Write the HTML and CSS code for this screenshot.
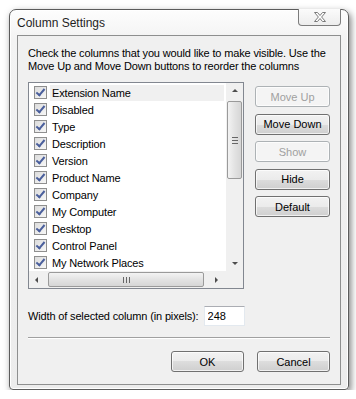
FILE: index.html
```html
<!DOCTYPE html>
<html>
  <head>
    <title>Column Settings</title>
    <meta charset="UTF-8">
    <link rel="stylesheet" href="styles.css">
  </head>

  <body>
    <div class="window">
      <div class="titlebar">
        <div class="title">Column Settings</div>
        <div class="close-btn">
          <svg width="14" height="10" viewBox="0 0 14 10">
            <path d="M1.5 0.5 H4.5 L7 3.5 L9.5 0.5 H12.5 L8.6 5 L12.5 9.5 H9.5 L7 6.5 L4.5 9.5 H1.5 L5.4 5 Z" fill="#fff" stroke="#7a7a7a" stroke-width="1"/>
          </svg>
        </div>
      </div>

      <div class="client">
        <p class="intro">Check the columns that you would like to make visible. Use the Move Up and Move Down buttons to reorder the columns</p>

        <div class="main-row">
          <div class="listbox">
            <ul class="items">
              <li class="item"><span class="check"></span><span class="label selected">Extension Name</span></li>
              <li class="item"><span class="check"></span><span class="label">Disabled</span></li>
              <li class="item"><span class="check"></span><span class="label">Type</span></li>
              <li class="item"><span class="check"></span><span class="label">Description</span></li>
              <li class="item"><span class="check"></span><span class="label">Version</span></li>
              <li class="item"><span class="check"></span><span class="label">Product Name</span></li>
              <li class="item"><span class="check"></span><span class="label">Company</span></li>
              <li class="item"><span class="check"></span><span class="label">My Computer</span></li>
              <li class="item"><span class="check"></span><span class="label">Desktop</span></li>
              <li class="item"><span class="check"></span><span class="label">Control Panel</span></li>
              <li class="item"><span class="check"></span><span class="label">My Network Places</span></li>
            </ul>
            <div class="vscroll">
              <span class="arrow up"></span>
              <div class="vthumb"><span class="grip-h"></span></div>
              <span class="arrow down"></span>
            </div>
            <div class="hscroll">
              <span class="arrow left"></span>
              <div class="hthumb"><span class="grip-v"></span></div>
              <span class="arrow right"></span>
            </div>
            <div class="corner"></div>
          </div>

          <div class="side-buttons">
            <button class="btn" disabled>Move Up</button>
            <button class="btn">Move Down</button>
            <button class="btn" disabled>Show</button>
            <button class="btn">Hide</button>
            <button class="btn">Default</button>
          </div>
        </div>

        <div class="width-row">
          <label for="colwidth">Width of selected column (in pixels):</label>
          <input id="colwidth" class="field" type="text" value="248">
        </div>

        <div class="separator"></div>

        <div class="footer-buttons">
          <button class="btn btn-wide">OK</button>
          <button class="btn btn-wide">Cancel</button>
        </div>
      </div>
    </div>
  </body>
</html>
```

FILE: styles.css
```css
body {
  margin: 0;
  padding: 0;
  background-color: #fff;
  font-family: "Liberation Sans", Arial, sans-serif;
  font-size: 11px;
  letter-spacing: -0.15px;
  color: #000;
}

.window {
  margin: 9px 0 0 9px;
  width: 338px;
  height: 379px;
  border: 1px solid #5c5c5c;
  border-radius: 7px 7px 4px 4px;
  background: linear-gradient(#fdfdfd, #f3f3f3 30px, #ececec);
  box-shadow: 2px 3px 7px rgba(0, 0, 0, 0.5), inset 0 0 0 1px #fff;
  display: flex;
  flex-direction: column;
}

.titlebar {
  height: 25px;
  display: flex;
  align-items: flex-start;
  padding-left: 7px;
}

.title {
  font-size: 12px;
  letter-spacing: 0;
  margin-top: 6px;
  color: #1e1e1e;
}

.close-btn {
  margin-left: auto;
  margin-right: 7px;
  margin-top: -1px;
  width: 41px;
  height: 16px;
  border: 1px solid #7c7c7c;
  border-top: none;
  border-radius: 0 0 4px 4px;
  background: linear-gradient(#fbfbfb, #ededed);
  display: flex;
  align-items: center;
  justify-content: center;
}

.client {
  margin: 0 7px 4px 7px;
  flex: 1;
  border: 1px solid #8e8f8f;
  background-color: #f0f0f0;
  padding: 11px 10px 0 10px;
}

.intro {
  margin: 0;
  line-height: 13px;
}

.main-row {
  display: flex;
  gap: 11px;
  margin-top: 9px;
}

.listbox {
  width: 215px;
  height: 205px;
  border: 1px solid #828790;
  background-color: #fff;
  display: grid;
  grid-template-columns: 1fr 17px;
  grid-template-rows: 1fr 17px;
}

.items {
  list-style: none;
  margin: 0;
  padding: 1px 0 0 0;
  overflow: hidden;
}

.item {
  height: 17px;
  display: flex;
  align-items: center;
  font-size: 11px;
}

.check {
  width: 11px;
  height: 11px;
  margin-left: 5px;
  margin-right: 3px;
  border: 1px solid #8f8f8f;
  background: linear-gradient(135deg, #dcdcdc, #f7f7f7);
  position: relative;
  flex-shrink: 0;
}

.check::after {
  content: "";
  position: absolute;
  left: 3px;
  top: 0px;
  width: 3px;
  height: 7px;
  border-right: 2px solid #4a5f9c;
  border-bottom: 2px solid #4a5f9c;
  transform: rotate(40deg);
}

.label {
  flex: 1;
  padding: 2px 2px;
  margin-right: 2px;
}

.label.selected {
  background-color: #f0f0f0;
}

.vscroll {
  background-color: #f0f0f0;
  display: flex;
  flex-direction: column;
  align-items: center;
}

.vthumb {
  margin-top: 9px;
  width: 13px;
  height: 76px;
  border: 1px solid #9a9a9a;
  border-radius: 2px;
  background: linear-gradient(90deg, #f3f3f3, #e3e3e3 50%, #d6d6d6);
  display: flex;
  align-items: center;
  justify-content: center;
}

.grip-h {
  width: 6px;
  height: 5px;
  border-top: 1px solid #666;
  border-bottom: 1px solid #666;
  background: linear-gradient(transparent 2px, #666 2px, #666 3px, transparent 3px);
}

.hscroll {
  background-color: #f0f0f0;
  display: flex;
  align-items: center;
}

.hthumb {
  margin-left: 10px;
  width: 154px;
  height: 13px;
  border: 1px solid #9a9a9a;
  border-radius: 2px;
  background: linear-gradient(#f3f3f3, #e3e3e3 50%, #d6d6d6);
  display: flex;
  align-items: center;
  justify-content: center;
}

.grip-v {
  width: 5px;
  height: 6px;
  border-left: 1px solid #666;
  border-right: 1px solid #666;
  background: linear-gradient(90deg, transparent 2px, #666 2px, #666 3px, transparent 3px);
}

.corner {
  background-color: #f0f0f0;
}

.arrow {
  width: 0;
  height: 0;
  border: 3px solid transparent;
}

.arrow.up {
  margin-top: 6px;
  border-bottom: 3px solid #4d4d4d;
  border-top-width: 0;
}

.arrow.down {
  margin-top: auto;
  margin-bottom: 6px;
  border-top: 3px solid #4d4d4d;
  border-bottom-width: 0;
}

.arrow.left {
  margin-left: 6px;
  border-right: 3px solid #4d4d4d;
  border-left-width: 0;
}

.arrow.right {
  margin-left: auto;
  margin-right: 8px;
  border-left: 3px solid #4d4d4d;
  border-right-width: 0;
}

.side-buttons {
  display: flex;
  flex-direction: column;
  gap: 6.5px;
  margin-top: 4px;
}

.btn {
  width: 75px;
  height: 21px;
  padding: 0;
  font-family: "Liberation Sans", Arial, sans-serif;
  font-size: 11px;
  color: #000;
  border: 1px solid #707070;
  border-radius: 3px;
  background: linear-gradient(#f2f2f2, #ebebeb 50%, #dddddd 50%, #cfcfcf);
  box-shadow: inset 0 0 0 1px rgba(255, 255, 255, 0.7);
}

.btn:disabled {
  color: #a0a0a0;
  border-color: #adb2b5;
  background: #f4f4f4;
}

.width-row {
  display: flex;
  align-items: center;
  margin-top: 17px;
  gap: 5px;
}

.field {
  width: 33px;
  height: 18px;
  padding: 0 3px;
  border: 1px solid #e3e9ef;
  border-top-color: #abadb3;
  background-color: #fff;
  font-family: "Liberation Sans", Arial, sans-serif;
  font-size: 11px;
}

.separator {
  margin-top: 11px;
  height: 1px;
  background-color: #a0a0a0;
  border-bottom: 1px solid #fff;
}

.footer-buttons {
  display: flex;
  justify-content: flex-end;
  gap: 13px;
  margin-top: 12px;
}

.btn-wide {
  width: 73px;
}
```
